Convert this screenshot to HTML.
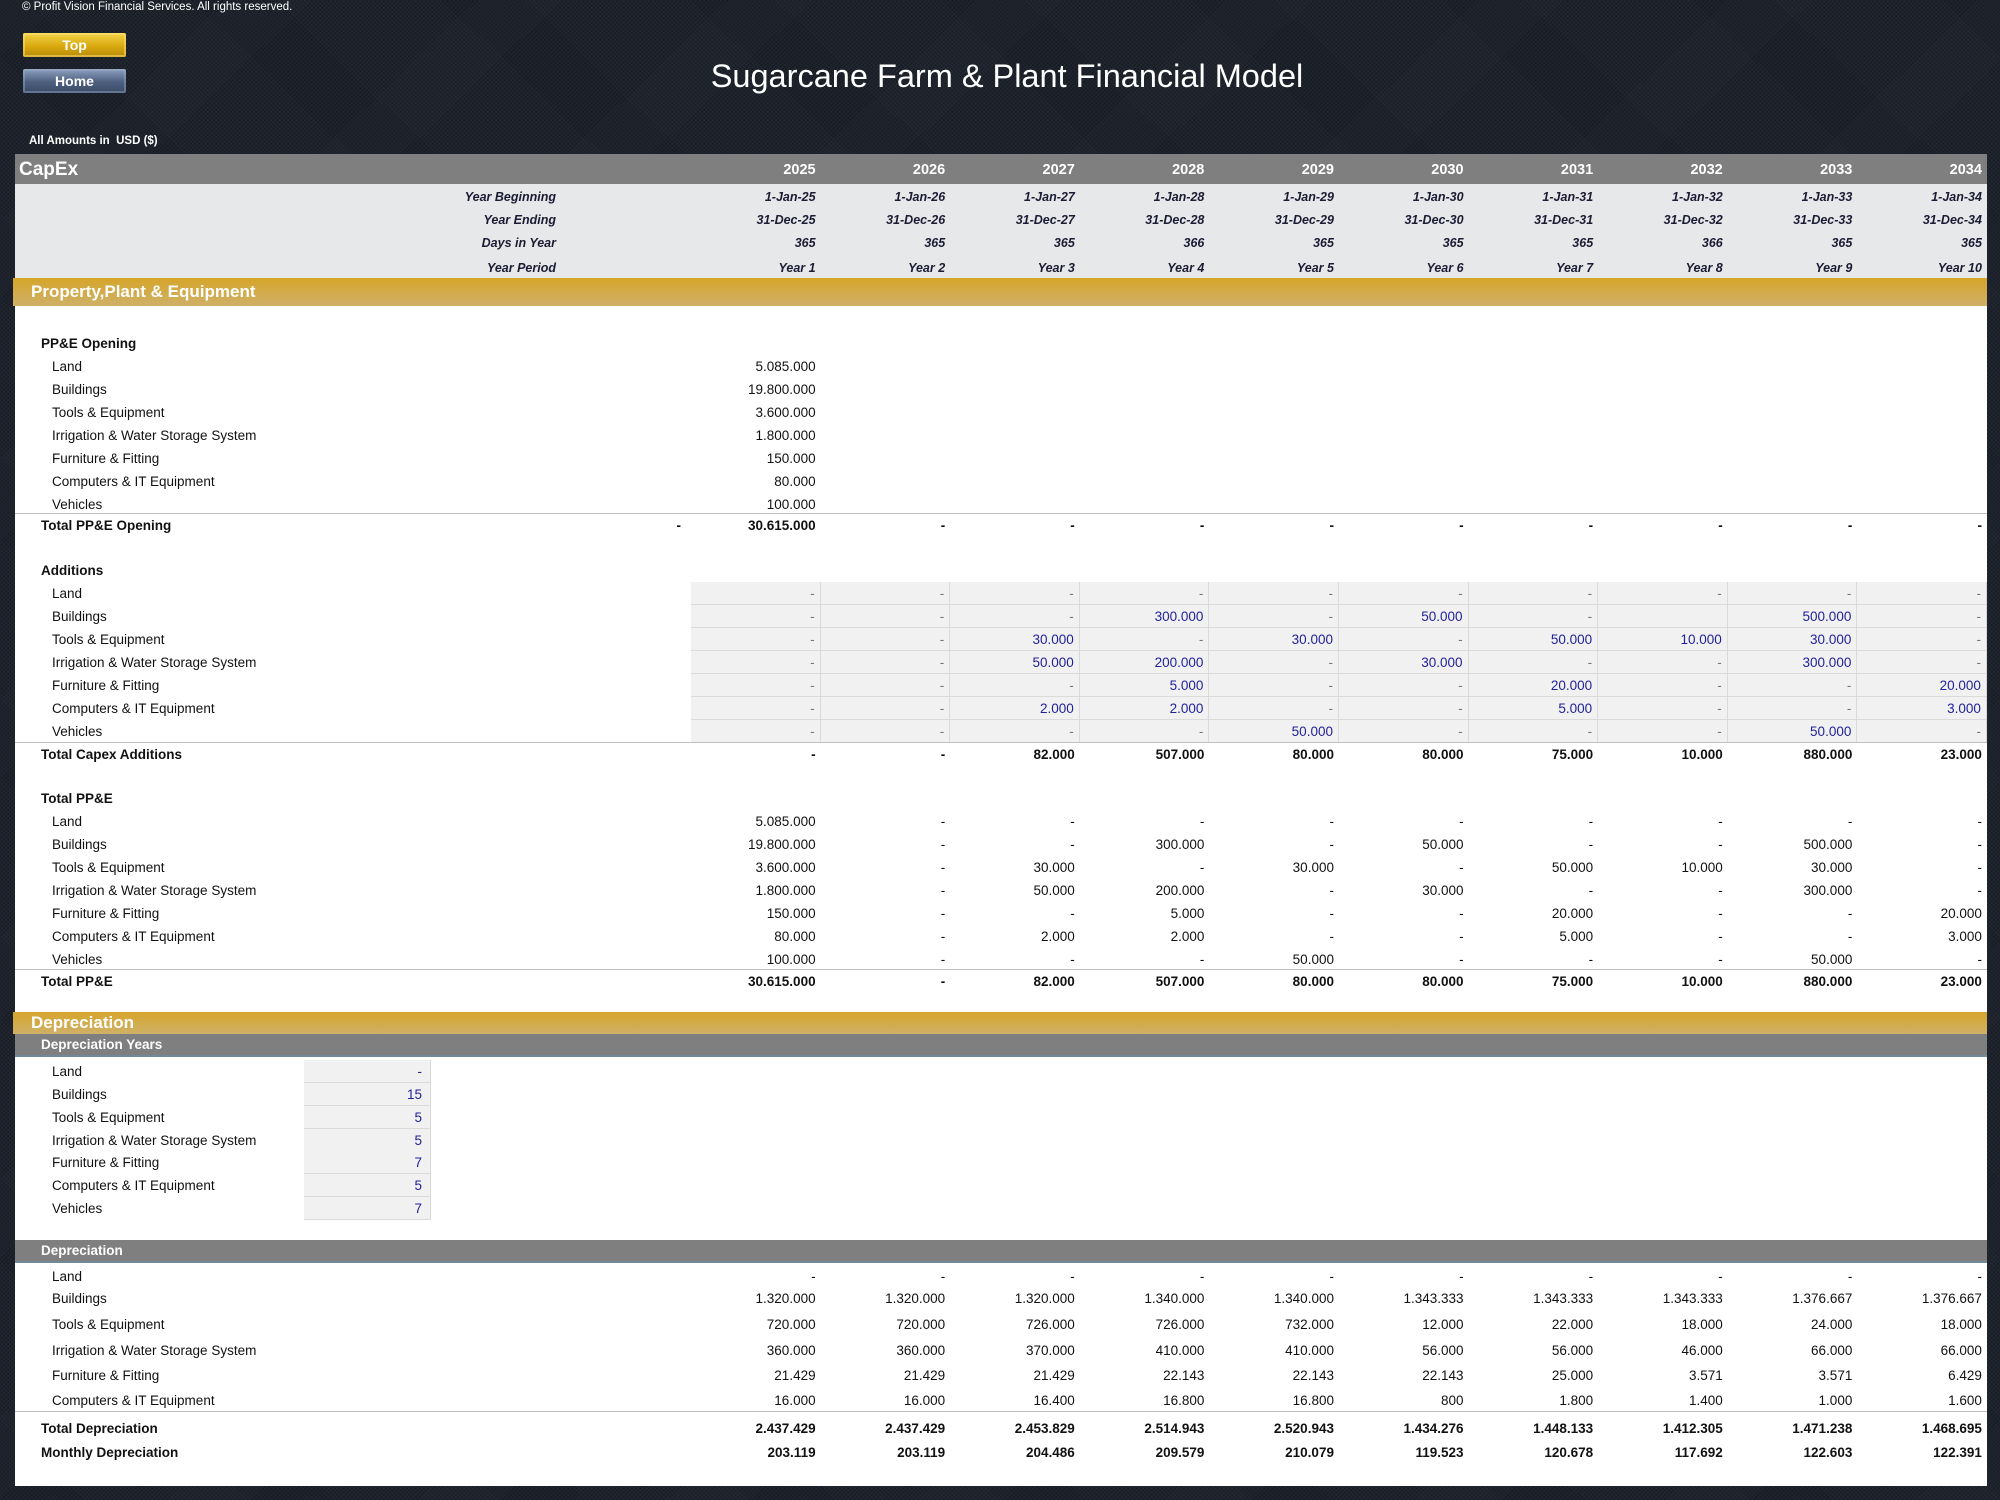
<!DOCTYPE html>
<html><head><meta charset="utf-8"><style>
*{margin:0;padding:0;box-sizing:border-box}
body{width:2000px;height:1500px;position:relative;overflow:hidden;font-family:"Liberation Sans",sans-serif;
background:#1d222c;background-image:repeating-linear-gradient(45deg,rgba(255,255,255,.035) 0 1px,transparent 1px 3px),repeating-linear-gradient(-45deg,rgba(0,0,0,.25) 0 1px,transparent 1px 3px)}
.abs{position:absolute}
.copy{left:22px;top:1px;color:#fff;font-size:11.5px}
.btn{left:23px;width:103px;height:24px;color:#fff;font-weight:bold;font-size:14px;text-align:center;line-height:24px;border-radius:2px}
.top{top:33px;background:linear-gradient(#f3d34a,#d9a90f 55%,#b88a08);box-shadow:inset 0 0 0 2px rgba(255,230,120,.5)}
.home{top:69px;background:linear-gradient(#8fa1bf,#4d5f7f 55%,#3a4a66);box-shadow:inset 0 0 0 2px rgba(160,180,210,.4)}
.title{left:0;width:2014px;top:58px;text-align:center;color:#fff;font-size:32.5px}
.amt{left:29px;top:135px;color:#fff;font-size:11.5px;font-weight:bold}
.sheet{left:15px;top:154px;width:1972px;height:1332px;background:#fff}
.capbar{left:15px;top:154px;width:1972px;height:30px;background:#7f7f7f}
.hdr{left:15px;top:184px;width:1972px;height:94px;background:#e7e8ea}
.gold{left:13px;width:1974px;background:linear-gradient(#d6a52a,#cfb068)}
.gold span{position:absolute;left:18px;color:#fff;font-weight:bold;font-size:17px}
.gray{left:15px;width:1972px;height:23px;background:#7f7f7f;border-bottom:2px solid #6f8a99}
.gray span{position:absolute;left:26px;top:3px;color:#fff;font-weight:bold;font-size:13.5px}
.r{position:absolute;left:15px;width:1972px;height:23px;display:grid;grid-template-columns:676px repeat(10,129.6px);align-items:stretch;font-size:13.5px;color:#111}
.r>*{display:flex;align-items:center;justify-content:flex-end;padding-right:5px;font-style:normal;white-space:nowrap}
.r>.l{justify-content:space-between;padding-left:37px;padding-right:10px}
.r.h>.l,.r.t>.l{padding-left:26px}
.r.h,.r.t{font-weight:bold}
.r.t{border-top:1px solid #bfbfbf}
.in{background:#f1f1f1;border-right:1px solid #dadada;border-bottom:1px solid #dadada}
.b{color:#1f1f9a}.g{color:#777}
.y{color:#fff;font-weight:bold;font-size:14.5px}
.yi{font-style:italic!important;font-weight:bold;color:#1b1b33;font-size:12.5px}
.d{position:absolute;left:15px;width:1972px;height:23px;display:grid;grid-template-columns:289px 127px;font-size:13.5px;color:#111}
.d>span{display:flex;align-items:center;padding-left:37px}
.d>b{display:flex;align-items:center;justify-content:flex-end;padding-right:8px;font-weight:normal;color:#1f1f9a;background:#f1f1f1;border-bottom:1px solid #dadada;border-right:1px solid #dadada}
</style></head><body>
<div class="abs copy">© Profit Vision Financial Services. All rights reserved.</div>
<div class="abs btn top">Top</div>
<div class="abs btn home">Home</div>
<div class="abs title">Sugarcane Farm &amp; Plant Financial Model</div>
<div class="abs amt">All Amounts in&nbsp; USD ($)</div>
<div class="abs sheet"></div>
<div class="abs capbar"></div>
<div class="abs hdr"></div>
<div class="r" style="top:157px;height:26px"><i class="l" style="padding-left:4px;color:#fff;font-weight:bold;font-size:19px">CapEx</i><i class="y">2025</i><i class="y">2026</i><i class="y">2027</i><i class="y">2028</i><i class="y">2029</i><i class="y">2030</i><i class="y">2031</i><i class="y">2032</i><i class="y">2033</i><i class="y">2034</i></div>
<div class="r yi" style="top:185px"><i class="l yi" style="justify-content:flex-end;padding-right:135px">Year Beginning</i><i class="yi">1-Jan-25</i><i class="yi">1-Jan-26</i><i class="yi">1-Jan-27</i><i class="yi">1-Jan-28</i><i class="yi">1-Jan-29</i><i class="yi">1-Jan-30</i><i class="yi">1-Jan-31</i><i class="yi">1-Jan-32</i><i class="yi">1-Jan-33</i><i class="yi">1-Jan-34</i></div>
<div class="r" style="top:208px"><i class="l yi" style="justify-content:flex-end;padding-right:135px">Year Ending</i><i class="yi">31-Dec-25</i><i class="yi">31-Dec-26</i><i class="yi">31-Dec-27</i><i class="yi">31-Dec-28</i><i class="yi">31-Dec-29</i><i class="yi">31-Dec-30</i><i class="yi">31-Dec-31</i><i class="yi">31-Dec-32</i><i class="yi">31-Dec-33</i><i class="yi">31-Dec-34</i></div>
<div class="r" style="top:231px"><i class="l yi" style="justify-content:flex-end;padding-right:135px">Days in Year</i><i class="yi">365</i><i class="yi">365</i><i class="yi">365</i><i class="yi">366</i><i class="yi">365</i><i class="yi">365</i><i class="yi">365</i><i class="yi">366</i><i class="yi">365</i><i class="yi">365</i></div>
<div class="r" style="top:256px"><i class="l yi" style="justify-content:flex-end;padding-right:135px">Year Period</i><i class="yi">Year 1</i><i class="yi">Year 2</i><i class="yi">Year 3</i><i class="yi">Year 4</i><i class="yi">Year 5</i><i class="yi">Year 6</i><i class="yi">Year 7</i><i class="yi">Year 8</i><i class="yi">Year 9</i><i class="yi">Year 10</i></div>
<div class="abs gold" style="top:278px;height:28px"><span style="top:4px">Property,Plant &amp; Equipment</span></div>

<div class="r h" style="top:332px"><i class="l">PP&amp;E Opening</i></div>
<div class="r" style="top:355px"><i class="l">Land</i><i>5.085.000</i></div>
<div class="r" style="top:378px"><i class="l">Buildings</i><i>19.800.000</i></div>
<div class="r" style="top:401px"><i class="l">Tools &amp; Equipment</i><i>3.600.000</i></div>
<div class="r" style="top:424px"><i class="l">Irrigation &amp; Water Storage System</i><i>1.800.000</i></div>
<div class="r" style="top:447px"><i class="l">Furniture &amp; Fitting</i><i>150.000</i></div>
<div class="r" style="top:470px"><i class="l">Computers &amp; IT Equipment</i><i>80.000</i></div>
<div class="r" style="top:493px"><i class="l">Vehicles</i><i>100.000</i></div>
<div class="r t" style="top:513px;height:24px"><i class="l"><span>Total PP&amp;E Opening</span><span>-</span></i><i>30.615.000</i><i>-</i><i>-</i><i>-</i><i>-</i><i>-</i><i>-</i><i>-</i><i>-</i><i>-</i></div>

<div class="r h" style="top:559px"><i class="l">Additions</i></div>
<div class="r" style="top:582px"><i class="l">Land</i><i class="in g">-</i><i class="in g">-</i><i class="in g">-</i><i class="in g">-</i><i class="in g">-</i><i class="in g">-</i><i class="in g">-</i><i class="in g">-</i><i class="in g">-</i><i class="in g">-</i></div>
<div class="r" style="top:605px"><i class="l">Buildings</i><i class="in g">-</i><i class="in g">-</i><i class="in g">-</i><i class="in b">300.000</i><i class="in g">-</i><i class="in b">50.000</i><i class="in g">-</i><i class="in"></i><i class="in b">500.000</i><i class="in g">-</i></div>
<div class="r" style="top:628px"><i class="l">Tools &amp; Equipment</i><i class="in g">-</i><i class="in g">-</i><i class="in b">30.000</i><i class="in g">-</i><i class="in b">30.000</i><i class="in g">-</i><i class="in b">50.000</i><i class="in b">10.000</i><i class="in b">30.000</i><i class="in g">-</i></div>
<div class="r" style="top:651px"><i class="l">Irrigation &amp; Water Storage System</i><i class="in g">-</i><i class="in g">-</i><i class="in b">50.000</i><i class="in b">200.000</i><i class="in g">-</i><i class="in b">30.000</i><i class="in g">-</i><i class="in g">-</i><i class="in b">300.000</i><i class="in g">-</i></div>
<div class="r" style="top:674px"><i class="l">Furniture &amp; Fitting</i><i class="in g">-</i><i class="in g">-</i><i class="in g">-</i><i class="in b">5.000</i><i class="in g">-</i><i class="in g">-</i><i class="in b">20.000</i><i class="in g">-</i><i class="in g">-</i><i class="in b">20.000</i></div>
<div class="r" style="top:697px"><i class="l">Computers &amp; IT Equipment</i><i class="in g">-</i><i class="in g">-</i><i class="in b">2.000</i><i class="in b">2.000</i><i class="in g">-</i><i class="in g">-</i><i class="in b">5.000</i><i class="in g">-</i><i class="in g">-</i><i class="in b">3.000</i></div>
<div class="r" style="top:720px"><i class="l">Vehicles</i><i class="in g">-</i><i class="in g">-</i><i class="in g">-</i><i class="in g">-</i><i class="in b">50.000</i><i class="in g">-</i><i class="in g">-</i><i class="in g">-</i><i class="in b">50.000</i><i class="in g">-</i></div>
<div class="r t" style="top:742px;height:24px"><i class="l">Total Capex Additions</i><i>-</i><i>-</i><i>82.000</i><i>507.000</i><i>80.000</i><i>80.000</i><i>75.000</i><i>10.000</i><i>880.000</i><i>23.000</i></div>

<div class="r h" style="top:787px"><i class="l">Total PP&amp;E</i></div>
<div class="r" style="top:810px"><i class="l">Land</i><i>5.085.000</i><i>-</i><i>-</i><i>-</i><i>-</i><i>-</i><i>-</i><i>-</i><i>-</i><i>-</i></div>
<div class="r" style="top:833px"><i class="l">Buildings</i><i>19.800.000</i><i>-</i><i>-</i><i>300.000</i><i>-</i><i>50.000</i><i>-</i><i>-</i><i>500.000</i><i>-</i></div>
<div class="r" style="top:856px"><i class="l">Tools &amp; Equipment</i><i>3.600.000</i><i>-</i><i>30.000</i><i>-</i><i>30.000</i><i>-</i><i>50.000</i><i>10.000</i><i>30.000</i><i>-</i></div>
<div class="r" style="top:879px"><i class="l">Irrigation &amp; Water Storage System</i><i>1.800.000</i><i>-</i><i>50.000</i><i>200.000</i><i>-</i><i>30.000</i><i>-</i><i>-</i><i>300.000</i><i>-</i></div>
<div class="r" style="top:902px"><i class="l">Furniture &amp; Fitting</i><i>150.000</i><i>-</i><i>-</i><i>5.000</i><i>-</i><i>-</i><i>20.000</i><i>-</i><i>-</i><i>20.000</i></div>
<div class="r" style="top:925px"><i class="l">Computers &amp; IT Equipment</i><i>80.000</i><i>-</i><i>2.000</i><i>2.000</i><i>-</i><i>-</i><i>5.000</i><i>-</i><i>-</i><i>3.000</i></div>
<div class="r" style="top:948px"><i class="l">Vehicles</i><i>100.000</i><i>-</i><i>-</i><i>-</i><i>50.000</i><i>-</i><i>-</i><i>-</i><i>50.000</i><i>-</i></div>
<div class="r t" style="top:969px;height:24px"><i class="l">Total PP&amp;E</i><i>30.615.000</i><i>-</i><i>82.000</i><i>507.000</i><i>80.000</i><i>80.000</i><i>75.000</i><i>10.000</i><i>880.000</i><i>23.000</i></div>

<div class="abs gold" style="top:1012px;height:22px"><span style="top:1px">Depreciation</span></div>
<div class="abs gray" style="top:1034px"><span>Depreciation Years</span></div>
<div class="d" style="top:1060px"><span>Land</span><b>-</b></div>
<div class="d" style="top:1083px"><span>Buildings</span><b>15</b></div>
<div class="d" style="top:1106px"><span>Tools &amp; Equipment</span><b>5</b></div>
<div class="d" style="top:1129px"><span>Irrigation &amp; Water Storage System</span><b>5</b></div>
<div class="d" style="top:1151px"><span>Furniture &amp; Fitting</span><b>7</b></div>
<div class="d" style="top:1174px"><span>Computers &amp; IT Equipment</span><b>5</b></div>
<div class="d" style="top:1197px"><span>Vehicles</span><b>7</b></div>

<div class="abs gray" style="top:1240px"><span>Depreciation</span></div>
<div class="r" style="top:1265px"><i class="l">Land</i><i>-</i><i>-</i><i>-</i><i>-</i><i>-</i><i>-</i><i>-</i><i>-</i><i>-</i><i>-</i></div>
<div class="r" style="top:1287px"><i class="l">Buildings</i><i>1.320.000</i><i>1.320.000</i><i>1.320.000</i><i>1.340.000</i><i>1.340.000</i><i>1.343.333</i><i>1.343.333</i><i>1.343.333</i><i>1.376.667</i><i>1.376.667</i></div>
<div class="r" style="top:1313px"><i class="l">Tools &amp; Equipment</i><i>720.000</i><i>720.000</i><i>726.000</i><i>726.000</i><i>732.000</i><i>12.000</i><i>22.000</i><i>18.000</i><i>24.000</i><i>18.000</i></div>
<div class="r" style="top:1339px"><i class="l">Irrigation &amp; Water Storage System</i><i>360.000</i><i>360.000</i><i>370.000</i><i>410.000</i><i>410.000</i><i>56.000</i><i>56.000</i><i>46.000</i><i>66.000</i><i>66.000</i></div>
<div class="r" style="top:1364px"><i class="l">Furniture &amp; Fitting</i><i>21.429</i><i>21.429</i><i>21.429</i><i>22.143</i><i>22.143</i><i>22.143</i><i>25.000</i><i>3.571</i><i>3.571</i><i>6.429</i></div>
<div class="r" style="top:1389px"><i class="l">Computers &amp; IT Equipment</i><i>16.000</i><i>16.000</i><i>16.400</i><i>16.800</i><i>16.800</i><i>800</i><i>1.800</i><i>1.400</i><i>1.000</i><i>1.600</i></div>
<div class="r t" style="top:1411px;height:29px;padding-top:4px"><i class="l">Total Depreciation</i><i>2.437.429</i><i>2.437.429</i><i>2.453.829</i><i>2.514.943</i><i>2.520.943</i><i>1.434.276</i><i>1.448.133</i><i>1.412.305</i><i>1.471.238</i><i>1.468.695</i></div>
<div class="r h" style="top:1441px"><i class="l">Monthly Depreciation</i><i>203.119</i><i>203.119</i><i>204.486</i><i>209.579</i><i>210.079</i><i>119.523</i><i>120.678</i><i>117.692</i><i>122.603</i><i>122.391</i></div>
</body></html>
